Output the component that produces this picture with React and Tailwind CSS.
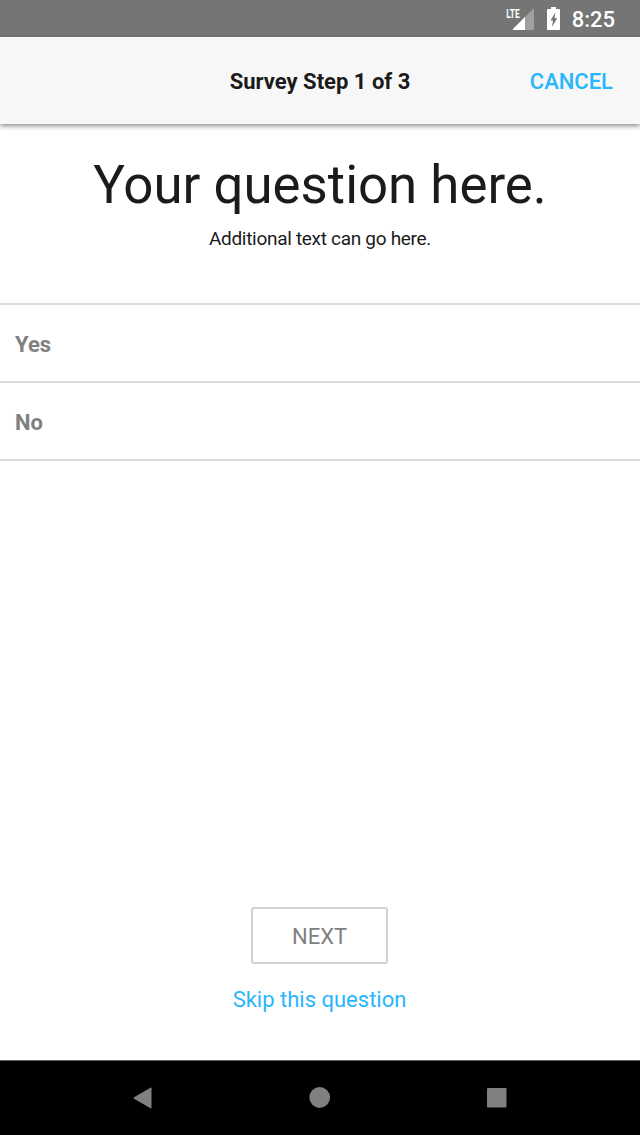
export default function App() {
  return (
    <div className="flex h-[1135px] w-[640px] flex-col overflow-hidden bg-white font-['Roboto',sans-serif] text-[#1b1b1b]">
      <div className="flex h-[37px] shrink-0 items-start justify-end bg-[#757575] pr-[25px] text-white">
        <svg width="31" height="30" viewBox="-1 -6 31 30" className="mt-px mr-[11px]">
          <path d="M27.5 1.5Q28 1.5 28 2.5V22Q28 23 27 23H7.5Q6 23 7 22Z" fill="#a0a0a0" />
          <path d="M19 10V23H7.5Q6 23 7 22Z" fill="#fff" />
          <text transform="translate(0.2 10.7) scale(0.62 1)" fill="#fff" fontSize="13.5" fontWeight="700">LTE</text>
        </svg>
        <svg width="14" height="23" viewBox="0 0 14 23" className="mt-[7px] mr-[11px]">
          <path d="M4 0H9V2H12Q13 2 13 3V22Q13 23 12 23H1Q0 23 0 22V3Q0 2 1 2H4Z" fill="#fff" />
          <path d="M8.4 5.5L3.4 13.5H6L5 20L10.2 11.2H7.6Z" fill="#757575" />
        </svg>
        <span className="mt-px text-[22px] font-medium leading-[37px]">8:25</span>
      </div>
      <header className="relative grid h-[87px] shrink-0 grid-cols-[1fr_auto_1fr] items-center bg-[#f7f7f7] pt-[2px] shadow-[0_2px_5px_rgba(0,0,0,0.45)]">
        <h1 className="col-start-2 text-[22px] font-bold">Survey Step 1 of 3</h1>
        <button className="justify-self-end pr-[27px] text-[22px] font-medium text-[#29b6fc]">CANCEL</button>
      </header>
      <main className="flex flex-1 flex-col">
        <div className="flex h-[179px] flex-col items-center pt-[31px]">
          <h2 className="text-[52.8px] leading-[61px]">Your question here.</h2>
          <p className="mt-[10px] text-[19px] leading-[26px] tracking-[-0.3px]">Additional text can go here.</p>
        </div>
        <div className="border-t-2 border-[#dadada] text-[22px] font-bold text-[#808080]">
          <div className="flex h-[78px] items-center border-b-2 border-[#dadada] pt-[2px] pl-[15px]">Yes</div>
          <div className="flex h-[78px] items-center border-b-2 border-[#dadada] pt-[2px] pl-[15px]">No</div>
        </div>
        <div className="mt-auto flex flex-col items-center pr-px pb-[46px]">
          <button className="h-[57px] w-[137px] rounded-[3px] border-2 border-[#d2d2d2] pt-[2px] text-[22px] text-[#808080]">NEXT</button>
          <button className="mt-[22px] text-[22px] leading-[28px] text-[#29b6fc]">Skip this question</button>
        </div>
      </main>
      <nav className="flex h-[75px] shrink-0 items-center justify-center gap-[156px] border-t border-[#606060] bg-black">
        <svg width="20" height="22" viewBox="0 0 20 22"><path d="M17.5 .7Q18.5 .2 18.5 1.2V20.8Q18.5 21.8 17.5 21.3L1 11.7Q0 11 1 10.3Z" fill="#808080" /></svg>
        <svg width="22" height="22" viewBox="0 0 22 22"><circle cx="10.7" cy="10.5" r="10.4" fill="#808080" /></svg>
        <svg width="20" height="20" viewBox="0 0 20 20"><rect x="0" y="0" width="19.5" height="19.5" rx="1" fill="#808080" /></svg>
      </nav>
    </div>
  );
}
